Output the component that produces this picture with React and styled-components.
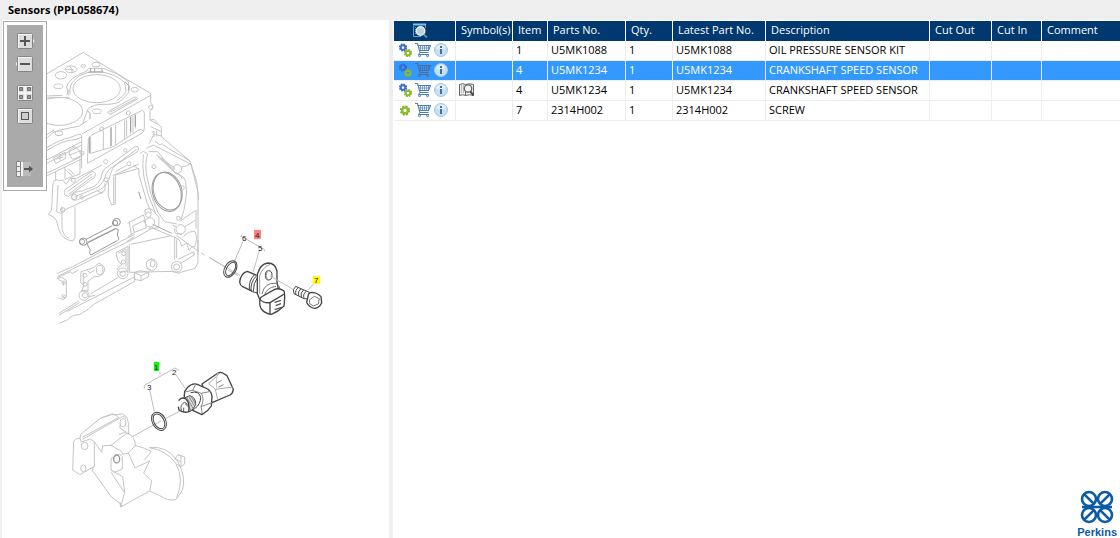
import React, { useState } from "react";
import styled, { createGlobalStyle } from "styled-components";

const GlobalStyle = createGlobalStyle`
  * {
    box-sizing: border-box;
  }

  body {
    margin: 0;
    background-color: #efefef;
    color: #000000;
    font-family: "Open Sans", "Noto Sans", sans-serif;
    font-size: 11px;
  }
`;

const Page = styled.div`
  min-height: 100vh;
  display: flex;
  flex-direction: column;
`;

const Title = styled.h1`
  margin: 0;
  height: 20px;
  padding-left: 8px;
  font-size: 11px;
  font-weight: 700;
  line-height: 20px;
`;

const Panels = styled.main`
  flex: 1;
  display: flex;
  padding-left: 2px;
  gap: 4px;
`;

const DrawingPanel = styled.section`
  position: relative;
  flex: 0 0 387px;
  overflow: hidden;
  background-color: #ffffff;
`;

const Drawing = styled.svg`
  display: block;
  width: 100%;
  fill: none;
  stroke: #c4c4c4;
  stroke-width: 3;
  stroke-linejoin: round;
`;

const Callout = styled.text`
  fill: #222222;
  stroke: none;
  font-family: "Liberation Sans", sans-serif;
  font-size: 8px;
`;

const Toolbar = styled.div`
  position: absolute;
  top: 1px;
  left: 1px;
  width: 44px;
  height: 170px;
  padding: 7px 0 0;
  border: 1px solid #aaaaaa;
  outline: 3px solid #ffffff;
  outline-offset: -4px;
  background-color: #aaaaaa;
  display: flex;
  flex-direction: column;
  align-items: center;
`;

const ToolButton = styled.button`
  width: 20px;
  height: 23px;
  padding: 0;
  border: 0;
  background: none;
  display: flex;
  align-items: center;
  justify-content: center;
  cursor: pointer;
  margin-top: ${(props) => props.$gap || 0}px;
`;

const PartsPanel = styled.section`
  flex: 1;
  min-width: 0;
  padding: 1px 0 0 1px;
  background-color: #ffffff;
  display: flex;
  flex-direction: column;
`;

const Table = styled.table`
  width: 100%;
  table-layout: fixed;
  border-collapse: separate;
  border-spacing: 0;
`;

const Col = styled.col`
  width: ${(props) => props.$width};
`;

const HeadCell = styled.th`
  height: 20px;
  padding: 0 0 2px 5px;
  border-right: 1px solid #ffffff;
  background-color: #003870;
  color: #ffffff;
  font-weight: 400;
  line-height: 18px;
  text-align: left;
  white-space: nowrap;

  &:last-child {
    border-right: 0;
  }
`;

const Row = styled.tr`
  background-color: ${(props) => (props.$selected ? "#3399ff" : "#ffffff")};
  color: ${(props) => (props.$selected ? "#ffffff" : "#000000")};
  cursor: default;
`;

const Cell = styled.td`
  height: 20px;
  padding: 0 0 2px 3px;
  border-right: 1px solid #ededed;
  border-bottom: 1px solid #ededed;
  line-height: 17px;
  white-space: nowrap;

  &:last-child {
    border-right: 0;
  }
`;

const Icons = styled.div`
  display: flex;
  align-items: center;
  gap: 2px;
`;

const IconButton = styled.button`
  display: block;
  width: 16px;
  height: 16px;
  padding: 0;
  border: 0;
  background: none;
  cursor: pointer;
  margin-left: ${(props) => (props.$center ? "13px" : "0")};

  svg {
    display: block;
  }
`;

const Footer = styled.footer`
  margin-top: auto;
  align-self: flex-end;
  padding-right: 3px;
  display: flex;
  flex-direction: column;
  align-items: center;
  color: #0b5aa6;
  font-family: "Liberation Sans", sans-serif;
  font-size: 11px;
  font-weight: 700;
  line-height: 12px;
`;

const columns = [
  { name: "Symbol(s)", width: "57px" },
  { name: "Item", width: "35px" },
  { name: "Parts No.", width: "78px" },
  { name: "Qty.", width: "47px" },
  { name: "Latest Part No.", width: "93px" },
  { name: "Description", width: "164px" },
  { name: "Cut Out", width: "62px" },
  { name: "Cut In", width: "50px" },
  { name: "Comment", width: "auto" },
];

const parts = [
  { item: 1, number: "U5MK1088", qty: 1, description: "OIL PRESSURE SENSOR KIT", kit: true },
  { item: 4, number: "U5MK1234", qty: 1, description: "CRANKSHAFT SPEED SENSOR", kit: true },
  { item: 4, number: "U5MK1234", qty: 1, description: "CRANKSHAFT SPEED SENSOR", kit: true, book: true },
  { item: 7, number: "2314H002", qty: 1, description: "SCREW" },
];

const Gear = ({ x, y, color, dark, size = 1 }) => (
  <g transform={`translate(${x} ${y}) scale(${size})`}>
    <circle r="4" fill="none" stroke={dark} strokeWidth="2.2" strokeDasharray="1.9 1.24" />
    <circle r="2.8" fill="none" stroke={color} strokeWidth="2.4" />
  </g>
);

const GearsIcon = ({ kit }) => (
  <svg width="16" height="16" viewBox="0 0 16 16">
    {kit ? (
      <>
        <Gear x={6} y={5.5} color="#3a70d4" dark="#2f62c4" size={0.8} />
        <Gear x={11} y={11} color="#8abb30" dark="#7cae22" size={0.8} />
      </>
    ) : (
      <Gear x={8} y={8.5} color="#8abb30" dark="#75a61c" />
    )}
  </svg>
);

const CartIcon = ({ selected }) => (
  <svg width="16" height="16" viewBox="0 0 16 16" fill="none" stroke={selected ? "#4c6c9c" : "#4d7fb2"}>
    <path d="M0 1.5H2.5L5 10.5H13.5M3 3.5H15.5L13.5 8.5H4.5" strokeWidth="1.1" />
    <path d="M4 6H14.5M5.5 3.5V8.5M7.5 3.5V8.5M9.5 3.5V8.5M11.5 3.5V8.5M13.5 3.5V8.5" strokeWidth="0.7" />
    <path d="M5 10.5L3.5 12.5H14" />
    <circle cx="4.5" cy="13.7" r="1" />
    <circle cx="12.5" cy="13.7" r="1" />
  </svg>
);

const InfoIcon = () => (
  <svg width="16" height="16" viewBox="0 0 16 16">
    <circle cx="8" cy="8" r="6.5" fill="#c6dff1" stroke="#a3c9e4" />
    <path d="M3 6A5.3 5.3 0 0 1 13 6Q8 9 3 6Z" fill="#e0effa" />
    <path d="M7 4H9V6H7ZM7 7H9V12H7Z" fill="#416f9f" />
  </svg>
);

const BookIcon = () => (
  <svg width="16" height="16" viewBox="0 0 16 16" fill="none" stroke="#666666">
    <path d="M.5 2.5Q4 1 6.5 2.5V13.5Q4 12 .5 13.5ZM6.5 2.5Q11 1 14.5 2.5V13.5Q11 12 6.5 13.5" fill="#eeeeee" />
    <path d="M2.5 3V11M4.5 3V11" stroke="#bbbbbb" />
    <circle cx="9" cy="6.5" r="3.7" fill="#f5f5f5" strokeWidth="1.3" />
    <path d="M11.5 9.5L14.5 13.5" stroke="#444444" strokeWidth="2" />
  </svg>
);

const SearchListIcon = () => (
  <svg width="16" height="16" viewBox="0 0 16 16" fill="none">
    <path d="M1.5 4V14.5H9M13.5 3V6" stroke="#5fa0c8" />
    <path d="M3.5 5V13" stroke="#5fa0c8" strokeDasharray="1 1" />
    <path d="M1 2.5H14" stroke="#86c0e2" strokeWidth="2" />
    <circle cx="8.5" cy="9" r="4.3" fill="#b9d0e0" stroke="#e8f1f7" strokeWidth="1.4" />
    <path d="M12 12.5L15 15.5" stroke="#588bb0" strokeWidth="2" />
  </svg>
);

const ToolIcon = ({ kind }) => (
  <svg width="20" height="18" viewBox="0 0 20 18" fill="none" stroke="#555555">
    {kind === "in" && <path d="M17 6L19 9L17 12Z" fill="#eeeeee" stroke="#eeeeee" />}
    {kind === "out" && <path d="M3 6L1 9L3 12Z" fill="#eeeeee" stroke="#eeeeee" />}
    {kind !== "hide" && (
      <>
        <rect x="2.5" y="1.5" width="15" height="15" rx="1" fill="#dddddd" stroke="#858585" />
        <path d="M3 2.5H17M3.5 2V16" stroke="#f4f4f4" />
      </>
    )}
    {kind === "in" && <path d="M5 9H15M10 4V14" strokeWidth="2" />}
    {kind === "out" && <path d="M5 9H15" strokeWidth="2" />}
    {kind === "fit" && (
      <>
        <path d="M10 2V16M3 9H17" stroke="#f4f4f4" strokeWidth="2" />
        <path d="M4.5 3.5H7.5V6.5H4.5ZM12.5 3.5H15.5V6.5H12.5ZM4.5 11.5H7.5V14.5H4.5ZM12.5 11.5H15.5V14.5H12.5Z" fill="#999999" stroke="#707070" />
      </>
    )}
    {kind === "actual" && <rect x="6.5" y="5.5" width="7" height="7" fill="#cccccc" />}
    {kind === "hide" && (
      <>
        <path d="M7 2H16V16H7Z" fill="#bbbbbb" stroke="none" />
        <path d="M1.5 1.5H5.5V16.5H1.5ZM1 6.5H5M1 11.5H5" fill="#eeeeee" stroke="#858585" />
        <path d="M7 2V16" stroke="#f4f4f4" strokeWidth="2" />
        <path d="M9 9H17" strokeWidth="2" />
        <path d="M14 5.5L18 9L14 12.5Z" fill="#555555" stroke="none" />
      </>
    )}
  </svg>
);

const EngineBlock = () => (
  <>
    {/* cylinder head face */}
    <g transform="scale(.33333)">
      <path d="M130 228L250 157L283 178L380 238L452 280V308L458 316V326L450 334V360L462 358L484 382V410L570 483L590 545L596 600" />
      <ellipse cx="290" cy="266" rx="71" ry="42" />
      <ellipse cx="177" cy="334" rx="71" ry="42" />
      <path d="M205 286L200 260Q205 235 260 213L266 205H310L352 222L385 245L386 278L360 305Q340 315 300 313Q264 318 262 332L248 372" />
      <path d="M210 284Q208 252 222 242Q240 220 274 216H306Q350 223 374 248L378 275Q370 290 350 302M200 286L208 268M141 288L188 286M141 294L208 292" />
      <path d="M272 205V217M284 205V217M306 206V217M265 216H310M375 245L388 260L386 272M262 332L270 340V358" stroke="#a5a5a5" />
      <path d="M141 415L158 398L161 388M158 398L180 390L238 378L262 362M141 404L158 392" />
      <ellipse cx="288" cy="194" rx="12" ry="7" />
      <ellipse cx="250" cy="198" rx="7" ry="4" />
      <ellipse cx="213" cy="208" rx="18" ry="10" />
      <path d="M197 208H216V218M207 198L222 214" />
      <ellipse cx="183" cy="226" rx="17" ry="11" />
      <ellipse cx="175" cy="259" rx="13" ry="7" />
      <ellipse cx="404" cy="269" rx="11" ry="7" />
      <ellipse cx="291" cy="334" rx="13" ry="7" />
      <ellipse cx="177" cy="400" rx="12" ry="7" />
      <path d="M324 335L402 292Q412 289 414 296L333 342Q321 342 324 335M330 337L408 296" />
      <path d="M246 402L452 286M265 418L275 405L425 332Q433 330 433 342V384Q433 396 424 401L262 490ZM272 412V460L340 440L420 388M420 388L433 393M310 394V448M333 382V440M347 375V436M374 361V417M380 358V410M392 350V402M399 347V398M406 344V386" />
      <path d="M268 410V460M333 382V438M392 350V395M406 344V380" stroke="#999999" />
      <circle cx="305" cy="387" r="6" />
      <circle cx="385" cy="339" r="6" />
      <circle cx="452" cy="322" r="6" />
      <path d="M452 380L484 395M450 360L472 372M448 430L462 402L484 408M455 398L462 393V412M470 392V410" />
    </g>
    {/* crankcase and timing housing */}
    <g transform="translate(40 125) scale(.33333)">
      <path d="M20 68Q60 43 90 38L110 30Q123 24 125 33V130M20 77Q70 46 92 46Q110 45 125 36M20 105L125 50M20 115L125 60M20 145L125 94M20 153L125 102M88 75L105 65L125 83V92L98 103L88 88M88 75V90L125 76M40 98L76 82V101L47 115ZM47 103L70 96M60 88V106M47 140V168M75 125V163L120 147V101M80 137L98 154M85 132L104 148" />
      <circle cx="126" cy="84" r="6" />
      <path d="M46 165Q38 170 38 188L35 255L25 268Q44 275 49 286L57 315Q67 345 99 348L105 338V245M48 164Q58 170 68 165L78 178L92 160H110L186 120M54 180L50 260L62 265L74 255L190 200M66 245V310Q70 334 86 339" />
      <circle cx="68" cy="255" r="7" />
      <circle cx="100" cy="166" r="6" />
      <path d="M75 194L154 140Q171 138 164 157L85 214Q68 213 75 194ZM83 199L156 147M87 207L158 154" />
      <path d="M95 211Q101 200 126 198L163 184Q184 168 186 145Q190 130 210 120L286 64Q299 61 294 79L240 112Q216 124 211 149Q203 182 181 193L113 224Q91 231 95 211ZM103 216L171 188Q193 173 199 145Q207 130 225 121L289 74" />
      <circle cx="103" cy="216" r="8" />
      <circle cx="125" cy="217" r="5" />
      <circle cx="197" cy="110" r="6" />
      <circle cx="256" cy="76" r="5" />
      <circle cx="267" cy="116" r="6" />
      <circle cx="198" cy="164" r="6" />
      <path d="M205 170V215L215 240L226 237V150L297 130M221 155V235M170 195L185 206L195 195V175M218 152L297 117M226 140L260 121M280 120L297 134L297 150L322 235L335 264" />
      <path d="M300 85L310 79L323 87Q315 110 319 146L333 209L354 263L374 290L410 297M310 88Q306 123 312 158L325 210L346 263M344 48L360 60L366 56L385 70L450 108L465 165L474 202V390M320 70L340 60L450 116L439 123L424 126M326 80L353 80L405 144L430 156L437 170L440 205L432 255L423 285" />
      <path d="M350 90L405 130L398 138ZM356 97L397 131M365 99L394 128" />
      <circle cx="412" cy="132" r="13" />
      <path d="M402 140L420 149L427 162" />
      <g stroke="#999999">
        <ellipse cx="380" cy="201" rx="42" ry="60" transform="rotate(-17 380 201)" />
        <ellipse cx="383" cy="198" rx="42" ry="58" transform="rotate(-17 383 198)" />
        <path d="M296 200L303 222" />
        <path d="M137 344L217 302M143 352L225 311" />
        <path d="M141 356L150 350L228 311L235 314L232 330L237 342L233 346L153 390L149 386L150 374Z" />
        <circle cx="130" cy="350" r="11" />
        <circle cx="126" cy="350" r="8" />
        <circle cx="230" cy="291" r="11" />
        <circle cx="225" cy="294" r="8" />
      </g>
      <circle cx="342" cy="125" r="6" />
      <circle cx="427" cy="188" r="6" />
      <circle cx="415" cy="280" r="6" />
      <circle cx="422" cy="313" r="14" />
      <path d="M262 295L310 270L316 285L278 303L283 322L320 308L312 285M268 292L274 330M283 322L263 335M315 270V255Q333 244 343 262L357 277L356 308L325 312" />
      <circle cx="325" cy="269" r="8" />
      <circle cx="330" cy="292" r="14" fill="#ffffff" />
      <path d="M420 289L465 257M435 305L467 285M468 255V310M398 300L410 307M402 310L406 325L426 329" />
    </g>
    {/* sump rail */}
    <g transform="translate(40 190) scale(.33333)">
      <path d="M50 251L100 229L285 132M55 258L104 234L288 143M52 262L92 245L96 251L116 240M288 143L340 112M260 155L284 140" />
      <path d="M272 163L390 138M268 163V247L400 244M404 141V209M410 148V205M415 208L461 185L463 195L420 221M418 248L465 235L474 218V150M398 245L420 250M404 141L418 150L425 168L440 160L447 181L456 170L463 171Q475 148 465 125Q448 121 430 140" />
      <circle cx="410" cy="230" r="16" />
      <circle cx="410" cy="231" r="9" />
      <path d="M283 248L300 242L326 247V260L303 272L283 268ZM283 248L303 257L326 247M303 257V272" />
      <ellipse cx="335" cy="224" rx="16" ry="17" />
      <ellipse cx="338" cy="221" rx="7" ry="10" />
      <path d="M326 211L335 207M320 235L333 240" />
      <path d="M228 188L264 169V242L240 248L231 236L245 225L233 210ZM235 190L258 177M258 177V230" />
      <circle cx="251" cy="191" r="6" />
      <circle cx="250" cy="216" r="6" />
      <circle cx="248" cy="250" r="16" />
      <circle cx="248" cy="251" r="8" />
      <path d="M123 245L160 233L176 220Q194 224 194 241Q186 264 163 259L144 274V303L124 304L132 286L122 278ZM130 248V281M142 242L151 249L165 240" />
      <ellipse cx="179" cy="240" rx="10" ry="14" />
      <circle cx="135" cy="256" r="6" />
      <circle cx="135" cy="283" r="6" />
      <circle cx="132" cy="316" r="15" />
      <circle cx="135" cy="316" r="8" />
      <path d="M50 266L65 262L79 271V321L70 329L55 323M55 268L70 276V287M65 315L76 325M57 370L116 333M151 312L235 262M80 365L283 261M57 376L118 338M58 400L83 389Q96 374 119 374L145 357L160 344L284 274V250M145 320L165 316" />
      <circle cx="71" cy="278" r="5" />
      <circle cx="71" cy="319" r="5" />
      <path d="M338 103L395 130" stroke="#aaaaaa" />
      <path d="M334 113L404 142M409 136L475 184M483 188L494 195M507 202L545 224L600 256" />
    </g>
  </>
);

const SpeedSensor = () => (
  <g transform="translate(210 220) scale(.33333)">
    <path d="M0 114L44 140M54 150L84 167M73 125L98 66M148 92L129 157M92 48L163 88M92 48L97 43M163 88V94M295 210L313 189" stroke="#bdbdbd" />
    <g stroke="#444444" strokeWidth="3">
      <ellipse cx="61" cy="147" rx="17" ry="27" transform="rotate(30 61 147)" />
      <ellipse cx="62" cy="147" rx="12" ry="22" transform="rotate(30 62 147)" />
      <path d="M140 166L112 154Q92 159 89 186Q90 196 98 200L127 214" strokeWidth="4" fill="#ffffff" />
      <path d="M133 165Q116 181 118 207M138 169Q122 186 123 211M142 174Q130 188 130 214" />
      <path d="M118 207L127 215L146 220" />
      <path d="M142 221V164Q150 132 173 129Q197 129 201 154V186L205 206L149 238Z" fill="#ffffff" strokeWidth="4" />
      <path d="M149 222V168Q156 143 180 133" stroke="#999999" />
      <path d="M156 222Q164 187 196 190Q209 194 209 207M164 225Q170 203 198 199" stroke="#777777" />
      <ellipse cx="176" cy="166" rx="10" ry="14" />
      <path d="M172 178Q164 168 172 154" stroke="#888888" />
      <path d="M150 238Q151 231 159 228L194 208Q207 203 222 213Q226 225 222 258Q205 275 184 283Q165 281 154 267Q147 255 150 238Z" fill="#ffffff" strokeWidth="4" />
      <path d="M150 238Q161 250 180 248L223 222M180 248V282" strokeWidth="4" />
      <path d="M194 247L213 241M197 257L213 251M194 269L215 262" stroke="#555555" strokeWidth="4" />
      <path d="M257 199L298 217V237L282 236L252 221Q246 208 257 199Z" fill="#ffffff" />
      <path d="M265 203Q254 210 258 224M273 206Q262 214 266 228M281 210Q270 218 274 232M289 214Q278 221 282 235" />
      <path d="M294 230Q294 219 304 217Q321 217 333 230L335 248Q328 264 314 265Q298 264 290 247Z" fill="#ffffff" strokeWidth="4" />
      <path d="M299 239L313 229L328 236L325 252L310 258L299 251Z" stroke="#777777" />
    </g>
    <path d="M180 168L248 207" stroke="#bdbdbd" />
  </g>
);

const PressureSensor = () => (
  <g transform="translate(60 350) scale(.33333)">
    <path d="M38 360L41 273Q50 263 60 265L62 253L121 205L154 194H171L187 191L200 201L206 221V253L194 247L177 254M38 360L60 374L101 350L97 361L154 441L180 460L182 471L269 423M60 265L64 276L91 267L103 275V350M67 268L183 202Q194 196 197 206M103 275L125 307L128 287L153 286L185 304L188 313L205 309L225 354L269 333L251 369L275 393L269 423M153 286L201 249Q225 256 226 287L205 309M224 286Q253 293 274 304M274 304L253 331M268 293Q317 286 350 328Q382 385 366 423L348 449Q323 454 298 436L269 423M268 293Q319 301 347 339Q374 389 350 443M153 360L188 380L194 427L182 471M153 360V326L178 312L187 320V357L163 367L153 358" />
    <path d="M121 205L158 191L174 200M67 262L177 202M180 224V235L200 247M153 367L194 428M180 457L186 472" />
    <ellipse cx="189" cy="218" rx="9" ry="12" />
    <ellipse cx="74" cy="288" rx="10" ry="11" />
    <ellipse cx="70" cy="355" rx="8" ry="10" />
    <ellipse cx="170" cy="327" rx="9" ry="12" stroke="#999999" strokeWidth="4" />
    <path d="M344 328L354 314L363 318V350L350 343M355 314L374 321V342L363 350M344 327L363 335" />
    <path d="M215 261L303 213M318 205L362 182M253 116V106L345 54M345 54L357 61M300 73V65M283 185L269 120M376 115L348 75" stroke="#bdbdbd" />
    <g stroke="#444444" strokeWidth="3">
      <ellipse cx="297" cy="214" rx="20" ry="29" transform="rotate(-29 297 214)" />
      <ellipse cx="297" cy="214" rx="15" ry="24" transform="rotate(-29 297 214)" />
      <path d="M426 102L474 69Q481 65 488 69L501 77L520 118Q518 131 510 135L456 158L440 145Z" fill="#ffffff" strokeWidth="4" />
      <path d="M446 101L466 118L473 149M466 118L519 111M446 101L480 69" stroke="#aaaaaa" />
      <path d="M474 69Q467 83 470 116" stroke="#cccccc" />
      <path d="M469 100L485 91M475 111L491 104" stroke="#888888" />
      <path d="M374 124L383 112Q397 98 412 103L443 117Q455 125 456 140L454 168Q444 184 426 194L398 181L372 150Z" fill="#ffffff" strokeWidth="4" />
      <path d="M374 126L398 121L407 103M398 121L424 130L453 124M424 130Q435 149 423 170L427 191M423 170L456 158" stroke="#888888" />
      <path d="M392 128Q417 121 422 142Q422 163 404 176L387 185" />
      <path d="M374 144L389 137Q408 142 407 163L399 178L386 186Q370 162 374 144Z" fill="#dddddd" />
      <path d="M380 142L400 177M386 139L405 170M376 150L393 182M393 139L408 164" stroke="#888888" />
      <path d="M356 152Q365 139 378 147Q390 159 386 185Q371 190 357 180L355 170" fill="#ffffff" strokeWidth="4" />
      <path d="M364 181Q359 164 374 157L383 164M371 187V173M376 162L386 171" stroke="#555555" />
    </g>
  </g>
);

const AssemblyDrawing = () => (
  <Drawing viewBox="2 20 387 518" role="img" aria-label="Sensors">
    <EngineBlock />
    <SpeedSensor />
    <PressureSensor />
    <g stroke="none">
      <rect x="254" y="230" width="7" height="9" fill="#ff8080" />
      <rect x="313" y="276" width="7" height="8" fill="#ffff00" />
      <rect x="154" y="362" width="5" height="9" fill="#00ff00" />
    </g>
    <Callout x="255" y="238">4</Callout>
    <Callout x="242" y="241">6</Callout>
    <Callout x="258" y="251">5</Callout>
    <Callout x="314" y="283">7</Callout>
    <Callout x="154" y="370">1</Callout>
    <Callout x="172" y="375">2</Callout>
    <Callout x="147" y="390">3</Callout>
  </Drawing>
);

const PerkinsMark = () => (
  <svg width="34" height="36" viewBox="0 0 34 36" fill="none" stroke="#0b5aa6" strokeWidth="2.6">
    {[
      [9, 9, -45],
      [25, 9, 45],
      [9, 25, 45],
      [25, 25, -45],
    ].map(([x, y, angle]) => (
      <g key={`${x}-${y}`} transform={`translate(${x} ${y}) rotate(${angle})`}>
        <circle r="7" />
        <path d="M0 -7V7" />
      </g>
    ))}
    <path d="M2 17H32" />
  </svg>
);

const App = () => {
  const [selected, setSelected] = useState(1);

  return (
    <Page>
      <GlobalStyle />
      <Title>Sensors (PPL058674)</Title>
      <Panels>
        <DrawingPanel>
          <AssemblyDrawing />
          <Toolbar>
            <ToolButton aria-label="Zoom in">
              <ToolIcon kind="in" />
            </ToolButton>
            <ToolButton aria-label="Zoom out">
              <ToolIcon kind="out" />
            </ToolButton>
            <ToolButton aria-label="Fit to window" $gap={6}>
              <ToolIcon kind="fit" />
            </ToolButton>
            <ToolButton aria-label="Actual size">
              <ToolIcon kind="actual" />
            </ToolButton>
            <ToolButton aria-label="Hide parts list" $gap={30}>
              <ToolIcon kind="hide" />
            </ToolButton>
          </Toolbar>
        </DrawingPanel>
        <PartsPanel>
          <Table>
            <colgroup>
              <Col $width="62px" />
              {columns.map((column) => (
                <Col key={column.name} $width={column.width} />
              ))}
            </colgroup>
            <thead>
              <tr>
                <HeadCell>
                  <IconButton aria-label="Search parts" $center>
                    <SearchListIcon />
                  </IconButton>
                </HeadCell>
                {columns.map((column) => (
                  <HeadCell key={column.name}>{column.name}</HeadCell>
                ))}
              </tr>
            </thead>
            <tbody>
              {parts.map((part, index) => (
                <Row key={index} $selected={index === selected} onClick={() => setSelected(index)}>
                  <Cell>
                    <Icons>
                      <IconButton aria-label="Related parts">
                        <GearsIcon kit={part.kit} />
                      </IconButton>
                      <IconButton aria-label="Add to cart">
                        <CartIcon selected={index === selected} />
                      </IconButton>
                      <IconButton aria-label="Part information">
                        <InfoIcon />
                      </IconButton>
                    </Icons>
                  </Cell>
                  <Cell>
                    {part.book && (
                      <Icons>
                        <IconButton aria-label="Open publication">
                          <BookIcon />
                        </IconButton>
                      </Icons>
                    )}
                  </Cell>
                  <Cell>{part.item}</Cell>
                  <Cell>{part.number}</Cell>
                  <Cell>{part.qty}</Cell>
                  <Cell>{part.number}</Cell>
                  <Cell>{part.description}</Cell>
                  <Cell />
                  <Cell />
                  <Cell />
                </Row>
              ))}
            </tbody>
          </Table>
          <Footer>
            <PerkinsMark />
            Perkins
          </Footer>
        </PartsPanel>
      </Panels>
    </Page>
  );
};

export default App;
